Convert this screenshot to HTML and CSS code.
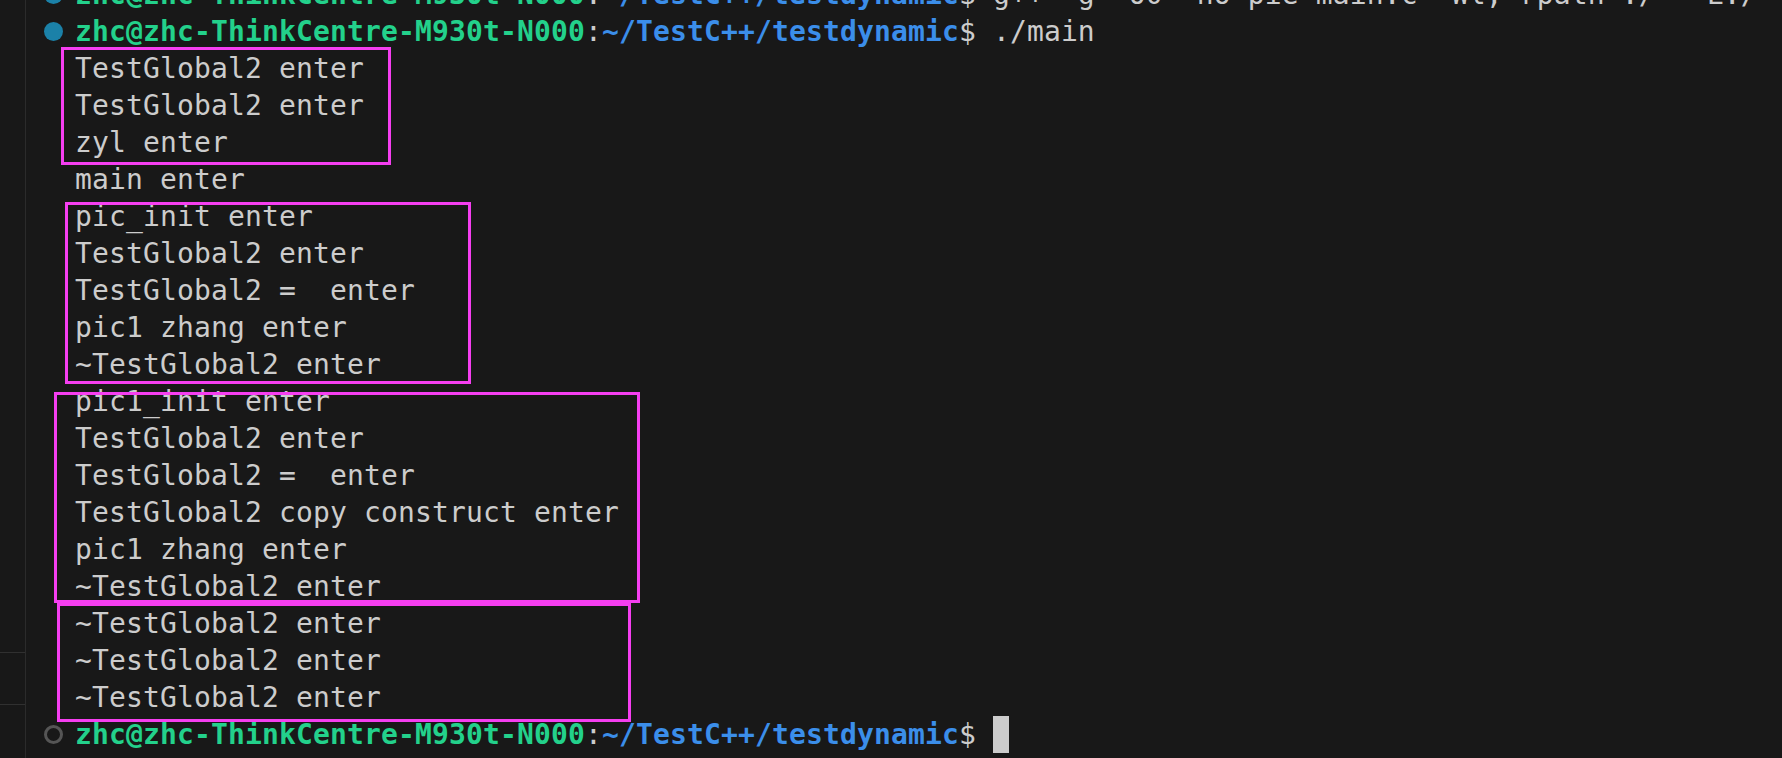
FILE: index.html
```html
<!DOCTYPE html>
<html>
<head>
  <meta charset="utf-8">
  <link rel="stylesheet" href="styles.css">
</head>
<body>
  <div class="sidebar">
    <div class="side-block side-top"></div>
    <div class="side-block side-mid"></div>
  </div>

  <div class="terminal">
    <div class="row"><span class="gutter"><span class="deco deco-ok"></span></span><span class="line"><span class="host">zhc@zhc-ThinkCentre-M930t-N000</span>:<span class="path">~/TestC++/testdynamic</span>$ g++ -g -O0 -no-pie main.c -Wl,-rpath=./  -L./</span></div>
    <div class="row"><span class="gutter"><span class="deco deco-ok"></span></span><span class="line"><span class="host">zhc@zhc-ThinkCentre-M930t-N000</span>:<span class="path">~/TestC++/testdynamic</span>$ ./main</span></div>

    <div class="group group-a">
      <div class="row"><span class="gutter"></span><span class="line">TestGlobal2 enter</span></div>
      <div class="row"><span class="gutter"></span><span class="line">TestGlobal2 enter</span></div>
      <div class="row"><span class="gutter"></span><span class="line">zyl enter</span></div>
    </div>

    <div class="row"><span class="gutter"></span><span class="line">main enter</span></div>

    <div class="group group-b">
      <div class="row"><span class="gutter"></span><span class="line">pic_init enter</span></div>
      <div class="row"><span class="gutter"></span><span class="line">TestGlobal2 enter</span></div>
      <div class="row"><span class="gutter"></span><span class="line">TestGlobal2 =  enter</span></div>
      <div class="row"><span class="gutter"></span><span class="line">pic1 zhang enter</span></div>
      <div class="row"><span class="gutter"></span><span class="line">~TestGlobal2 enter</span></div>
    </div>

    <div class="group group-c">
      <div class="row"><span class="gutter"></span><span class="line">pic1_init enter</span></div>
      <div class="row"><span class="gutter"></span><span class="line">TestGlobal2 enter</span></div>
      <div class="row"><span class="gutter"></span><span class="line">TestGlobal2 =  enter</span></div>
      <div class="row"><span class="gutter"></span><span class="line">TestGlobal2 copy construct enter</span></div>
      <div class="row"><span class="gutter"></span><span class="line">pic1 zhang enter</span></div>
      <div class="row"><span class="gutter"></span><span class="line">~TestGlobal2 enter</span></div>
    </div>

    <div class="group group-d">
      <div class="row"><span class="gutter"></span><span class="line">~TestGlobal2 enter</span></div>
      <div class="row"><span class="gutter"></span><span class="line">~TestGlobal2 enter</span></div>
      <div class="row"><span class="gutter"></span><span class="line">~TestGlobal2 enter</span></div>
    </div>

    <div class="row"><span class="gutter"><span class="deco deco-idle"></span></span><span class="line"><span class="host">zhc@zhc-ThinkCentre-M930t-N000</span>:<span class="path">~/TestC++/testdynamic</span>$ <span class="cursor"></span></span></div>
  </div>
</body>
</html>
```

FILE: styles.css
```css
:root {
  --bg-color: #181818;
  --border-color: #2b2b2b;
  --text-color: #cccccc;
  --host-color: #23d18b;
  --path-color: #3b8eea;
  --mark-color: #f53ef0;
}

body {
  margin: 0;
  height: 758px;
  overflow: hidden;
  display: flex;
  background-color: var(--bg-color);
  color: var(--text-color);
  font-family: "DejaVu Sans Mono", "Liberation Mono", monospace;
}

.sidebar {
  width: 25px;
  flex-shrink: 0;
  border-right: 1px solid var(--border-color);
}

.side-block {
  border-bottom: 1px solid #303030;
}

.side-top {
  height: 652px;
}

.side-mid {
  height: 51px;
}

.terminal {
  flex: 1;
  min-width: 0;
  margin-top: -24px;
  font-size: 28px;
  line-height: 37px;
  letter-spacing: 0.14px;
}

.row {
  display: flex;
  height: 37px;
  white-space: pre;
}

.gutter {
  width: 49px;
  flex-shrink: 0;
  display: flex;
  align-items: center;
}

.deco {
  width: 19px;
  height: 19px;
  margin-left: 18px;
  border-radius: 50%;
  box-sizing: border-box;
}

.deco-ok {
  background-color: #1b81a8;
}

.deco-idle {
  border: 3px solid #555555;
}

.host {
  color: var(--host-color);
  font-weight: bold;
}

.path {
  color: var(--path-color);
  font-weight: bold;
}

.cursor {
  display: inline-block;
  width: 16px;
  height: 37px;
  vertical-align: top;
  background-color: #cccccc;
}

/* annotation boxes drawn over the output */
.group {
  position: relative;
}

.group::after {
  content: "";
  position: absolute;
  box-sizing: border-box;
  border: 3px solid var(--mark-color);
}

.group-a::after {
  top: -3px;
  bottom: -4px;
  left: 35px;
  width: 330px;
}

.group-b::after {
  top: 4px;
  bottom: -1px;
  left: 39px;
  width: 406px;
}

.group-c::after {
  top: 9px;
  bottom: 2px;
  left: 28px;
  width: 586px;
}

.group-d::after {
  top: -2px;
  bottom: -6px;
  left: 31px;
  width: 574px;
}
```
